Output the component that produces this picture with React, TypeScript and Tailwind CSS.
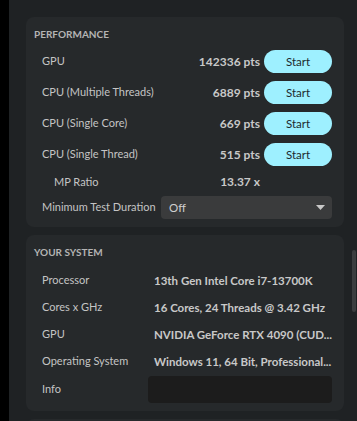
import React from "react";

const font = { fontFamily: 'Lato, "Noto Sans", sans-serif' };

function PerfRow({ label, value }: { label: string; value: string }) {
  return (
    <div className="flex items-center h-[31px]">
      <div className="pl-[16px] flex-1 min-w-0 text-[11px] text-[#c4c4c4]">{label}</div>
      <div className="text-[12px] font-bold text-[#c8c8c8] mr-[4px]">{value}</div>
      <div className="w-[68px] h-[23px] mr-[12px] rounded-full bg-[#9ef0ff] text-[#1d2a2d] text-[11.5px] flex items-center justify-center">Start</div>
    </div>
  );
}

function SysRow({ label, value }: { label: string; value: string }) {
  return (
    <div className="flex items-center h-[27px]">
      <div className="w-[128px] shrink-0 pl-[16px] text-[11px] text-[#c4c4c4]">{label}</div>
      <div className="min-w-0 text-[11.5px] font-bold text-[#c8c8c8] whitespace-nowrap">{value}</div>
    </div>
  );
}

export default function App() {
  return (
    <div className="w-[357px] h-[421px] overflow-hidden flex bg-[#1f2224]" style={font}>
      <div className="w-[9px] bg-black shrink-0" />
      <div className="relative flex-1 min-w-0 pl-[17px] pr-[13px] pt-[17px] flex flex-col gap-[8px]">
        <div className="rounded-[8px] bg-[#26292b] pt-[10px] pb-[8px]">
          <div className="pl-[8px] text-[10px] font-bold text-[#b4b4b4] h-[14px] flex items-center">PERFORMANCE</div>
          <div className="mt-[5px]">
            <PerfRow label="GPU" value="142336 pts" />
            <PerfRow label="CPU (Multiple Threads)" value="6889 pts" />
            <PerfRow label="CPU (Single Core)" value="669 pts" />
            <PerfRow label="CPU (Single Thread)" value="515 pts" />
          </div>
          <div className="flex items-center h-[26px] pb-[2px]">
            <div className="pl-[28px] flex-1 text-[11px] text-[#c4c4c4]">MP Ratio</div>
            <div className="text-[12px] font-bold text-[#c8c8c8] mr-[84px]">13.37 x</div>
          </div>
          <div className="flex items-center h-[23px]">
            <div className="pl-[16px] w-[135px] shrink-0 text-[11px] text-[#c4c4c4] whitespace-nowrap">Minimum Test Duration</div>
            <div className="flex-1 mr-[12px] h-[23px] rounded-[4px] bg-[#3a3b3c] flex items-center pl-[8px] pr-[7px] text-[11.5px] text-[#d0d0d0]">
              <span className="flex-1">Off</span>
              <svg width="9" height="5" viewBox="0 0 9 5"><path d="M0 0h9L4.5 5z" fill="#c8c8c8" /></svg>
            </div>
          </div>
        </div>
        <div className="rounded-[8px] bg-[#26292b] pt-[10px] pb-[7px]">
          <div className="pl-[8px] text-[10px] font-bold text-[#b4b4b4] h-[14px] flex items-center">YOUR SYSTEM</div>
          <div className="mt-[8px]">
            <SysRow label="Processor" value="13th Gen Intel Core i7-13700K" />
            <SysRow label="Cores x GHz" value="16 Cores, 24 Threads @ 3.42 GHz" />
            <SysRow label="GPU" value="NVIDIA GeForce RTX 4090 (CUD..." />
            <SysRow label="Operating System" value="Windows 11, 64 Bit, Professional..." />
            <div className="flex items-center h-[29px]">
              <div className="w-[122px] shrink-0 pl-[16px] text-[11px] text-[#c4c4c4]">Info</div>
              <div className="flex-1 mr-[12px] h-[27px] rounded-[4px] bg-[#1c1c1c]" />
            </div>
          </div>
        </div>
        <div className="rounded-[8px] bg-[#26292b] h-[20px] shrink-0" />
        <div className="absolute right-[1px] top-[250px] w-[4px] h-[62px] rounded-full bg-[#3b3d3f]" />
      </div>
    </div>
  );
}
